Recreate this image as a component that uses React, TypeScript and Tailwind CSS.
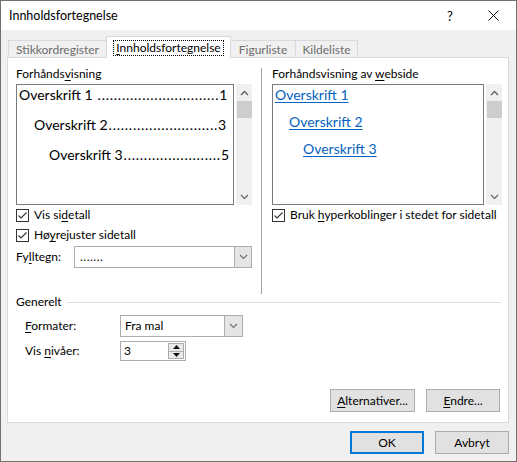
import React from "react";

function U({ children }: { children: React.ReactNode }) {
  return <span className="underline underline-offset-[2px] decoration-[1px]">{children}</span>;
}

function ChevronUp() {
  return (
    <svg width="9" height="6" viewBox="0 0 9 6">
      <path d="M1 5 L4.5 1.5 L8 5" fill="none" stroke="#606060" strokeWidth="1.4" />
    </svg>
  );
}

function ChevronDown({ color = "#606060" }: { color?: string }) {
  return (
    <svg width="9" height="6" viewBox="0 0 9 6">
      <path d="M1 1 L4.5 4.5 L8 1" fill="none" stroke={color} strokeWidth="1.2" />
    </svg>
  );
}

function Scrollbar() {
  return (
    <div className="ml-[2px] w-[16px] h-[121px] bg-[#f0f0f0] flex flex-col items-center">
      <div className="h-[17px] flex items-center justify-center">
        <ChevronUp />
      </div>
      <div className="w-[15px] h-[17px] bg-[#cdcdcd]" />
      <div className="flex-1" />
      <div className="h-[17px] flex items-center justify-center">
        <ChevronDown />
      </div>
    </div>
  );
}

function Checkbox({ children }: { children: React.ReactNode }) {
  return (
    <div className="h-[20px] flex items-center gap-[5px]">
      <div className="w-[13px] h-[13px] border border-[#333] bg-white flex items-center justify-center">
        <svg width="11" height="11" viewBox="0 0 11 11">
          <path d="M1.5 5.5 L4 8 L9.5 2.5" fill="none" stroke="#333" strokeWidth="1.1" />
        </svg>
      </div>
      <span>{children}</span>
    </div>
  );
}

function Leader({ pl, gap, label, dots, num }: { pl: string; gap: string; label: string; dots: string; num: string }) {
  return (
    <div className={`h-[20px] flex items-center pr-[7px] whitespace-nowrap ${pl}`}>
      <span>{label}</span>
      <span className={`tracking-[0.75px] ${gap}`}>{dots}</span>
      <span className="ml-auto">{num}</span>
    </div>
  );
}

function Button({ children, w, primary }: { children: React.ReactNode; w: string; primary?: boolean }) {
  return (
    <div
      className={`${w} h-[23px] bg-[#e1e1e1] flex items-center justify-center ${
        primary ? "border-2 border-[#0078d7]" : "border border-[#adadad]"
      }`}
    >
      {children}
    </div>
  );
}

export default function App() {
  return (
    <div className="w-[517px] h-[462px] bg-[#f0f0f0] border border-[#707070] flex flex-col font-['Lato',sans-serif] text-[12px] text-black leading-[16px]">
      {/* Title bar */}
      <div className="h-[29px] bg-white flex items-center">
        <span className="pl-[8px] flex-1 text-[12.5px]">Innholdsfortegnelse</span>
        <div className="w-[46px] h-full flex items-center justify-center pl-[6px] text-[13px]">?</div>
        <div className="w-[46px] h-full flex items-center justify-center">
          <svg width="11" height="11" viewBox="0 0 11 11">
            <path d="M0.5 0.5 L10.5 10.5 M10.5 0.5 L0.5 10.5" stroke="#111" strokeWidth="1" />
          </svg>
        </div>
      </div>

      <div className="flex-1 flex flex-col pl-[6px] pr-[7px]">
        {/* Tabs */}
        <div className="mt-[6px] h-[22px] flex items-end pl-[1px] relative z-10 -mb-px">
          <div className="h-[18px] w-[99px] border border-b-0 border-[#d9d9d9] flex items-center justify-center text-[#6d6d6d]">
            Stikkordregister
          </div>
          <div className="h-[22px] w-[125px] -mx-px border border-b-0 border-[#d9d9d9] bg-white flex items-center justify-center">
            <span className="outline outline-1 outline-dotted outline-black px-[2px] leading-[14px]">
              <U>I</U>nnholdsfortegnelse
            </span>
          </div>
          <div className="h-[18px] w-[66px] border border-b-0 border-[#d9d9d9] flex items-center justify-center text-[#6d6d6d]">
            Figurliste
          </div>
          <div className="h-[18px] w-[63px] -ml-px border border-b-0 border-[#d9d9d9] flex items-center justify-center text-[#6d6d6d]">
            Kildeliste
          </div>
        </div>

        {/* Panel */}
        <div className="h-[366px] bg-white border border-[#d9d9d9] flex flex-col">
          <div className="h-[236px] flex pt-[8px]">
            {/* Left column */}
            <div className="w-[244px] pl-[8px] flex flex-col">
              <div className="h-[16px]">
                Forhånds<U>v</U>isning
              </div>
              <div className="mt-[2px] flex">
                <div className="w-[218px] h-[121px] border border-[#7a7a7a] flex flex-col gap-[10px] text-[14px]">
                  <Leader pl="pl-[2px]" gap="ml-[5px]" label="Overskrift 1" dots=".............................." num="1" />
                  <Leader pl="pl-[17px]" gap="ml-[1px]" label="Overskrift 2" dots="..........................." num="3" />
                  <Leader pl="pl-[32px]" gap="ml-[1px]" label="Overskrift 3" dots="........................" num="5" />
                </div>
                <Scrollbar />
              </div>
              <Checkbox>
                Vis si<U>d</U>etall
              </Checkbox>
              <Checkbox>
                Hø<U>y</U>rejuster sidetall
              </Checkbox>
              <div className="mt-[1px] flex items-center">
                <span className="w-[58px]">
                  Fy<U>l</U>ltegn:
                </span>
                <div className="flex h-[22px] w-[178px] border border-[#adadad] bg-white">
                  <div className="flex-1 pl-[5px] flex items-center tracking-[0.5px]">.......</div>
                  <div className="w-[17px] bg-[#e5e5e5] border-l border-[#adadad] flex items-center justify-center">
                    <ChevronDown color="#707070" />
                  </div>
                </div>
              </div>
            </div>

            {/* Divider */}
            <div className="ml-[9px] mt-[2px] w-px self-stretch bg-[#a0a0a0]" />

            {/* Right column */}
            <div className="pl-[10px] flex flex-col">
              <div className="h-[16px]">
                Forhåndsvisning av <U>w</U>ebside
              </div>
              <div className="mt-[2px] flex">
                <div className="w-[212px] h-[121px] border border-[#7a7a7a] flex flex-col gap-[7px] text-[14px] text-[#0563c1]">
                  <div className="h-[20px] flex items-center pl-[2px]">
                    <span className="underline underline-offset-[2px]">Overskrift 1</span>
                  </div>
                  <div className="h-[20px] flex items-center pl-[16px]">
                    <span className="underline underline-offset-[2px]">Overskrift 2</span>
                  </div>
                  <div className="h-[20px] flex items-center pl-[30px]">
                    <span className="underline underline-offset-[2px]">Overskrift 3</span>
                  </div>
                </div>
                <Scrollbar />
              </div>
              <Checkbox>
                Bruk <U>h</U>yperkoblinger i stedet for sidetall
              </Checkbox>
            </div>
          </div>

          {/* Generelt */}
          <div className="h-[16px] flex items-center pl-[8px] pr-[7px]">
            <span>Generelt</span>
            <div className="flex-1 h-px bg-[#dcdcdc] ml-[5px]" />
          </div>
          <div className="mt-[5px] h-[22px] flex items-center pl-[17px]">
            <span className="w-[95px]">
              <U>F</U>ormater:
            </span>
            <div className="flex h-[22px] w-[123px] border border-[#adadad] bg-white">
              <div className="flex-1 pl-[4px] flex items-center">Fra mal</div>
              <div className="w-[18px] bg-[#e5e5e5] border-l border-[#adadad] flex items-center justify-center">
                <ChevronDown color="#707070" />
              </div>
            </div>
          </div>
          <div className="mt-[4px] h-[20px] flex items-center pl-[17px]">
            <span className="w-[95px]">
              Vis <U>n</U>ivåer:
            </span>
            <div className="flex h-[20px] w-[66px] border border-[#adadad] bg-white">
              <div className="flex-1 pl-[3px] flex items-center">3</div>
              <div className="w-[16px] my-[1px] mr-[1px] border border-[#adadad] bg-[#e9e9e9] flex flex-col">
                <div className="flex-1 flex items-center justify-center border-b border-[#adadad]">
                  <svg width="7" height="4" viewBox="0 0 7 4">
                    <path d="M0 4 L3.5 0 L7 4 Z" fill="#111" />
                  </svg>
                </div>
                <div className="flex-1 flex items-center justify-center">
                  <svg width="7" height="4" viewBox="0 0 7 4">
                    <path d="M0 0 L3.5 4 L7 0 Z" fill="#111" />
                  </svg>
                </div>
              </div>
            </div>
          </div>
          <div className="mt-[28px] flex justify-end gap-[11px] pr-[8px]">
            <Button w="w-[85px]">
              <span>
                <U>A</U>lternativer...
              </span>
            </Button>
            <Button w="w-[74px]">
              <span>
                <U>E</U>ndre...
              </span>
            </Button>
          </div>
        </div>

        {/* Dialog buttons */}
        <div className="mt-[8px] flex justify-end gap-[11px]">
          <Button w="w-[74px]" primary>
            OK
          </Button>
          <Button w="w-[74px]">Avbryt</Button>
        </div>
      </div>
    </div>
  );
}
